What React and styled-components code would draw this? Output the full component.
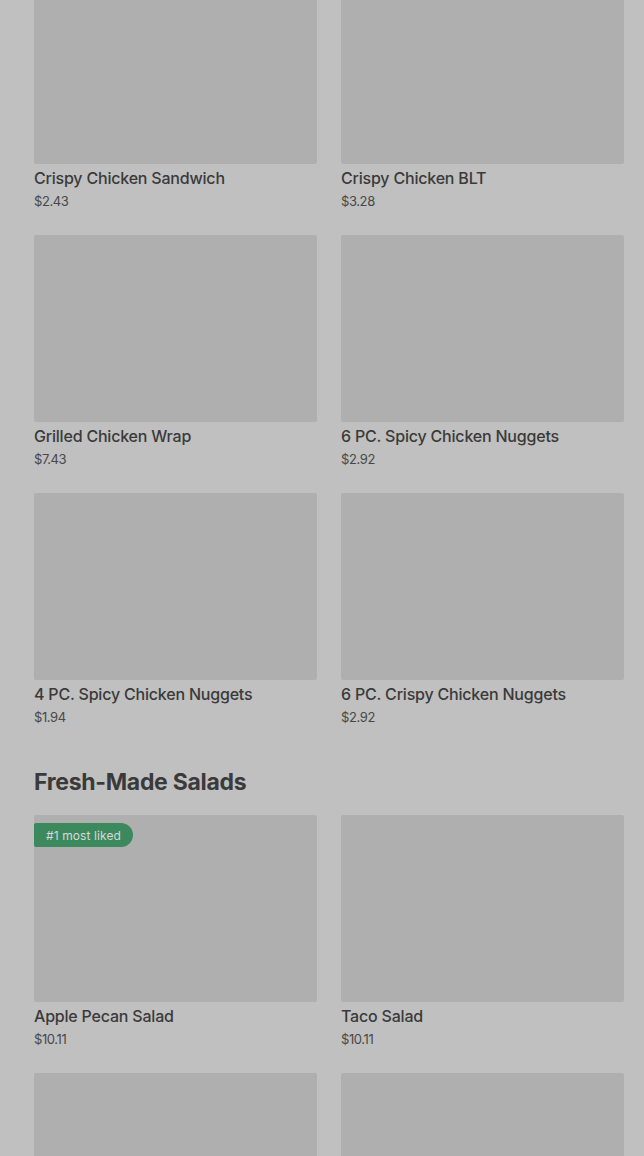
import React from "react";
import styled, { createGlobalStyle } from "styled-components";

const Global = createGlobalStyle`
  html, body { margin: 0; padding: 0; background: #c0c0c0; }
  body { font-family: Inter, "Noto Sans", sans-serif; overflow: hidden; }
`;

const Page = styled.div`
  background: #c0c0c0;
  padding: 0 20px 0 34px;
  margin-top: -23px;
  height: 1179px;
  overflow: hidden;
`;

const Section = styled.section`
  display: flex;
  flex-direction: column;
`;

const Heading = styled.h2`
  margin: 42px 0 19px;
  font-family: Inter, "Noto Sans", sans-serif;
  font-size: 23px;
  line-height: 28px;
  font-weight: 700;
  letter-spacing: -0.3px;
  color: #3a3a3a;
`;

const Grid = styled.div`
  display: grid;
  grid-template-columns: 283px 283px;
  column-gap: 24px;
  row-gap: 25px;
`;

const Card = styled.div`
  display: flex;
  flex-direction: column;
`;

const Thumb = styled.div`
  position: relative;
  height: 187px;
  background: #afafaf;
  border-radius: 2px;
`;

const Badge = styled.span`
  position: absolute;
  top: 8px;
  left: 0;
  height: 24px;
  padding: 0 12px 0 12px;
  display: flex;
  align-items: center;
  background: #3c895e;
  color: #d8d8d8;
  font-size: 12px;
  letter-spacing: 0.1px;
  border-radius: 2px 12px 12px 2px;
`;

const Title = styled.div`
  margin-top: 4px;
  font-size: 16px;
  line-height: 20px;
  font-weight: 500;
  letter-spacing: -0.2px;
  color: #3a3a3a;
`;

const Price = styled.div`
  margin-top: 4px;
  font-size: 13px;
  line-height: 18px;
  color: #484848;
  letter-spacing: -0.4px;
`;

const chicken = [
  ["Crispy Chicken Sandwich", "$2.43"],
  ["Crispy Chicken BLT", "$3.28"],
  ["Grilled Chicken Wrap", "$7.43"],
  ["6 PC. Spicy Chicken Nuggets", "$2.92"],
  ["4 PC. Spicy Chicken Nuggets", "$1.94"],
  ["6 PC. Crispy Chicken Nuggets", "$2.92"],
];

const salads = [
  { name: "Apple Pecan Salad", price: "$10.11", badge: "#1 most liked" },
  { name: "Taco Salad", price: "$10.11" },
  { id: "s3" },
  { id: "s4" },
];

function Item({ name, price, badge }) {
  return (
    <Card>
      <Thumb>{badge && <Badge>{badge}</Badge>}</Thumb>
      {name && <Title>{name}</Title>}
      {price && <Price>{price}</Price>}
    </Card>
  );
}

export default function App() {
  return (
    <>
      <Global />
      <Page>
        <Section>
          <Grid>
            {chicken.map(([n, p]) => (
              <Item key={n} name={n} price={p} />
            ))}
          </Grid>
        </Section>
        <Section>
          <Heading>Fresh-Made Salads</Heading>
          <Grid>
            {salads.map((s) => (
              <Item key={s.name || s.id} {...s} />
            ))}
          </Grid>
        </Section>
      </Page>
    </>
  );
}
